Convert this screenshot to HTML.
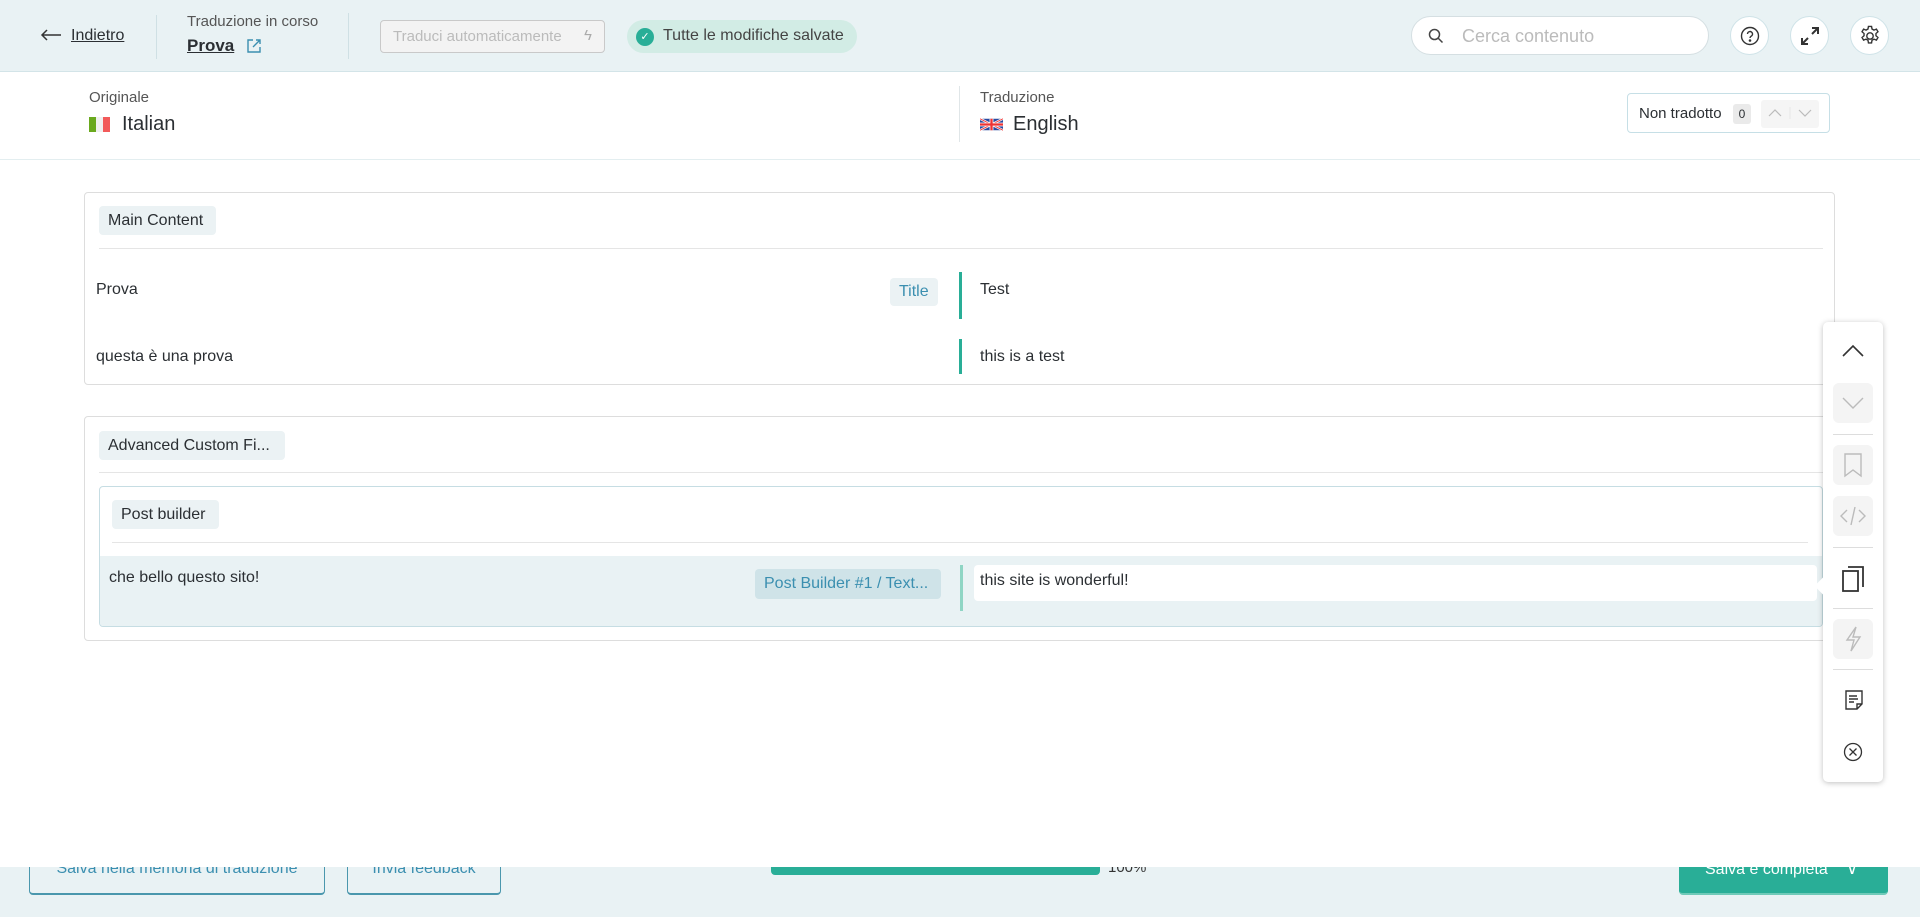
<!DOCTYPE html>
<html><head><meta charset="utf-8"><style>
*{box-sizing:border-box;margin:0;padding:0}
body{width:1920px;height:917px;overflow:hidden;background:#fff;font-family:"Liberation Sans",sans-serif;color:#2b2f33;position:relative}
.a{position:absolute}
.hdr{left:0;top:0;width:1920px;height:72px;background:#e9f2f4;border-bottom:1px solid #d3e4e8;z-index:3}
.vd{width:1px;background:#cfe0e4}
.tag{background:#ebf2f4;border-radius:4px;font-size:16px;color:#2b2f33;display:flex;align-items:center;padding:0 9px}
.circ{width:39px;height:39px;border-radius:50%;background:#fff;border:1px solid #cfe3e8;top:16px;display:flex;align-items:center;justify-content:center}
.sb{left:1833px;width:40px;height:40px;border-radius:6px;background:#f4f4f4;display:flex;align-items:center;justify-content:center}
.sep{left:1833px;width:40px;height:1px;background:#ddd}
</style></head><body>
<div class="a hdr">
  <svg class="a" style="left:40px;top:29px" width="22" height="12" viewBox="0 0 22 12" fill="none" stroke="#333" stroke-width="1.5"><path d="M21 6H2M7 1L2 6l5 5"/></svg>
  <div class="a" style="left:71px;top:27px;font-size:16px;text-decoration:underline;color:#2b2f33">Indietro</div>
  <div class="a vd" style="left:156px;top:15px;height:44px"></div>
  <div class="a" style="left:187px;top:13px;font-size:15px;color:#555">Traduzione in corso</div>
  <div class="a" style="left:187px;top:36px;font-size:17px;font-weight:bold;text-decoration:underline">Prova</div>
  <svg class="a" style="left:245px;top:37px" width="18" height="18" viewBox="0 0 18 18" fill="none" stroke="#3b8fb0" stroke-width="1.4"><path d="M8 3H3v12h12v-5M11 3h4v4M15 3L8 10"/></svg>
  <div class="a vd" style="left:348px;top:13px;height:46px"></div>
  <div class="a" style="left:380px;top:20px;width:225px;height:33px;border:1px solid #c9c9c9;border-radius:4px;background:#f3f3f3;font-size:15px;color:#bbb;padding:7px 12px">Traduci automaticamente<span style="position:absolute;right:12px;top:6px;color:#aaa">ϟ</span></div>
  <div class="a" style="left:627px;top:20px;width:230px;height:33px;border-radius:17px;background:#d2ece5;font-size:16px;color:#444;padding:7px 0 0 36px"><span style="position:absolute;left:9px;top:8px;width:18px;height:18px;border-radius:50%;background:#29ae97;color:#fff;font-size:11px;text-align:center;line-height:18px">✓</span>Tutte le modifiche salvate</div>
  <div class="a" style="left:1411px;top:16px;width:298px;height:39px;border-radius:20px;background:#fff;border:1px solid #d5dfe2;font-size:18px;color:#bbb;padding:9px 0 0 50px">Cerca contenuto
    <svg class="a" style="left:16px;top:11px" width="16" height="16" viewBox="0 0 16 16" fill="none" stroke="#444" stroke-width="1.5"><circle cx="6.5" cy="6.5" r="5"/><path d="M10 10l4.5 4.5"/></svg></div>
  <div class="a circ" style="left:1730px"><svg width="20" height="20" viewBox="0 0 20 20" fill="none" stroke="#333" stroke-width="1.4"><circle cx="10" cy="10" r="8.5"/><path d="M7.5 8a2.5 2.5 0 1 1 3.5 2.3c-.7.4-1 .8-1 1.7"/><circle cx="10" cy="14.5" r=".6" fill="#333"/></svg></div>
  <div class="a circ" style="left:1790px"><svg width="22" height="22" viewBox="0 0 22 22" fill="none" stroke="#333" stroke-width="2"><path d="M13 3h6v6M19 3l-6 6M9 19H3v-6M3 19l6-6"/></svg></div>
  <div class="a circ" style="left:1850px"><svg width="22" height="22" viewBox="0 0 24 24" fill="none" stroke="#333" stroke-width="1.5"><circle cx="12" cy="12" r="3.5"/><path d="M10.3 1.5h3.4l.5 2.9 2.1 1.2 2.7-1.1 1.7 2.9-2.2 1.9v2.4l2.2 1.9-1.7 2.9-2.7-1.1-2.1 1.2-.5 2.9h-3.4l-.5-2.9-2.1-1.2-2.7 1.1-1.7-2.9 2.2-1.9v-2.4L3.3 7.4 5 4.5l2.7 1.1 2.1-1.2z"/></svg></div>
</div>
<div class="a" style="left:0;top:867px;width:1920px;height:50px;background:#e9f2f4;z-index:0">
  <div class="a" style="left:29px;top:-40px;width:296px;height:68px;border:1px solid #4a97ad;border-bottom-width:2px;border-radius:4px;font-size:16px;color:#3b8fb0;text-align:center;padding-top:32px">Salva nella memoria di traduzione</div>
  <div class="a" style="left:347px;top:-40px;width:154px;height:68px;border:1px solid #4a97ad;border-bottom-width:2px;border-radius:4px;font-size:16px;color:#3b8fb0;text-align:center;padding-top:32px">Invia feedback</div>
  <div class="a" style="left:771px;top:-10px;width:329px;height:18px;border-radius:4px;background:#29ae97"></div>
  <div class="a" style="left:1108px;top:-8px;font-size:15px;color:#333">100%</div>
  <div class="a" style="left:1679px;top:-40px;width:209px;height:68px;background:#29ae97;border-bottom:2px solid #6fcab8;border-radius:4px;font-size:16px;color:#fff;padding:32px 0 0 26px">Salva e completa <span style="margin-left:14px">∨</span></div>
</div>
<div class="a" style="left:0;top:72px;width:1920px;height:795px;background:#fff;z-index:1"></div>
<div class="a" style="left:0;top:72px;width:1920px;height:88px;border-bottom:1px solid #e3eef0;z-index:2">
  <div class="a" style="left:89px;top:17px;font-size:15px;color:#555">Originale</div>
  <div class="a" style="left:89px;top:45px;width:7px;height:15px;background:#6aa91e"></div>
  <div class="a" style="left:96px;top:45px;width:7px;height:15px;background:#f0f0f0"></div>
  <div class="a" style="left:103px;top:45px;width:7px;height:15px;background:#f25a5a"></div>
  <div class="a" style="left:122px;top:41px;font-size:20px;color:#2b2f33">Italian</div>
  <div class="a vd" style="left:959px;top:14px;height:56px;background:#e0e6e8"></div>
  <div class="a" style="left:980px;top:17px;font-size:15px;color:#555">Traduzione</div>
  <svg class="a" style="left:980px;top:45px" width="23" height="15" viewBox="0 0 60 30"><rect width="60" height="30" fill="#2a4aa0"/><path d="M0 0L60 30M60 0L0 30" stroke="#fff" stroke-width="6"/><path d="M0 0L60 30M60 0L0 30" stroke="#e33" stroke-width="2.5"/><path d="M30 0v30M0 15h60" stroke="#fff" stroke-width="10"/><path d="M30 0v30M0 15h60" stroke="#e33" stroke-width="6"/></svg>
  <div class="a" style="left:1013px;top:41px;font-size:20px;color:#2b2f33">English</div>
  <div class="a" style="left:1627px;top:21px;width:203px;height:40px;border:1px solid #c6dfe6;border-radius:4px;font-size:15px;padding:11px 0 0 11px">Non tradotto
    <span class="a" style="left:105px;top:10px;width:18px;height:20px;background:#eaeaea;border-radius:3px;font-size:12px;text-align:center;line-height:20px">0</span>
    <span class="a" style="left:133px;top:6px;width:58px;height:28px;background:#f5f5f5;border-radius:3px;border-left:0"></span>
    <svg class="a" style="left:137px;top:13px" width="50" height="12" viewBox="0 0 50 12" fill="none" stroke="#bbb" stroke-width="1.2"><path d="M4 9l6-6 6 6M34 3l6 6 6-6"/><path d="M25 0v12" stroke="#e8e8e8"/></svg>
  </div>
</div>
<div class="a" style="left:84px;top:192px;width:1751px;height:193px;border:1px solid #ddd;border-radius:4px;z-index:2">
  <div class="a tag" style="left:14px;top:13px;height:29px;width:117px">Main Content</div>
  <div class="a" style="left:14px;top:55px;width:1724px;height:1px;background:#e5e5e5"></div>
  <div class="a" style="left:11px;top:88px;font-size:16px">Prova</div>
  <div class="a tag" style="left:805px;top:85px;height:28px;color:#3b8fb0">Title</div>
  <div class="a" style="left:874px;top:79px;width:3px;height:47px;background:#29ae97"></div>
  <div class="a" style="left:895px;top:88px;font-size:16px">Test</div>
  <div class="a" style="left:11px;top:155px;font-size:16px">questa è una prova</div>
  <div class="a" style="left:874px;top:146px;width:3px;height:35px;background:#29ae97"></div>
  <div class="a" style="left:895px;top:155px;font-size:16px">this is a test</div>
</div>
<div class="a" style="left:84px;top:416px;width:1751px;height:225px;border:1px solid #ddd;border-radius:4px;z-index:2">
  <div class="a tag" style="left:14px;top:14px;height:29px;width:186px">Advanced Custom Fi...</div>
  <div class="a" style="left:14px;top:55px;width:1724px;height:1px;background:#e5e5e5"></div>
  <div class="a" style="left:14px;top:69px;width:1724px;height:141px;border:1px solid #c6dde3;border-radius:4px;overflow:hidden">
    <div class="a tag" style="left:12px;top:13px;height:29px;width:107px">Post builder</div>
    <div class="a" style="left:12px;top:55px;width:1696px;height:1px;background:#e5e5e5"></div>
    <div class="a" style="left:0;top:69px;width:1724px;height:72px;background:#e9f2f4">
      <div class="a" style="left:9px;top:13px;font-size:16px">che bello questo sito!</div>
      <div class="a tag" style="left:655px;top:13px;height:30px;width:186px;background:#cfe3e8;color:#3b8fb0">Post Builder #1 / Text...</div>
      <div class="a" style="left:860px;top:9px;width:3px;height:46px;background:#8fd5c4"></div>
      <div class="a" style="left:874px;top:9px;width:843px;height:36px;background:#fff;border-radius:4px;font-size:16px;padding:7px 6px">this site is wonderful!</div>
    </div>
  </div>
</div>
<div class="a" style="left:1823px;top:322px;width:60px;height:460px;background:#fff;border-radius:5px;box-shadow:0 1px 6px rgba(0,0,0,.25);z-index:3">
  <div class="a" style="left:-6px;top:258px;width:12px;height:12px;background:#fff;transform:rotate(45deg)"></div>
  <svg class="a" style="left:18px;top:22px" width="24" height="14" viewBox="0 0 24 14" fill="none" stroke="#333" stroke-width="1.6"><path d="M2 12L12 2l10 10"/></svg>
</div>
<div class="a" style="z-index:4;left:0;top:0">
  <div class="a sb" style="top:383px"><svg width="24" height="14" viewBox="0 0 24 14" fill="none" stroke="#bbb" stroke-width="1.4"><path d="M2 2l10 10 10-10"/></svg></div>
  <div class="a sep" style="top:434px"></div>
  <div class="a sb" style="top:445px"><svg width="20" height="26" viewBox="0 0 20 26" fill="none" stroke="#bbb" stroke-width="1.4"><path d="M2 2h16v22l-8-6-8 6z"/></svg></div>
  <div class="a sb" style="top:496px"><svg width="28" height="22" viewBox="0 0 28 22" fill="none" stroke="#bbb" stroke-width="1.4"><path d="M8 5l-6 6 6 6M20 5l6 6-6 6M16 2l-4 18"/></svg></div>
  <div class="a sep" style="top:547px"></div>
  <svg class="a" style="left:1841px;top:565px" width="24" height="28" viewBox="0 0 24 28" fill="none" stroke="#333" stroke-width="1.8"><rect x="2" y="6" width="15" height="20"/><path d="M7 2h15v20"/></svg>
  <div class="a sep" style="top:608px"></div>
  <div class="a sb" style="top:619px"><svg width="18" height="28" viewBox="0 0 18 28" fill="none" stroke="#bbb" stroke-width="1.4"><path d="M12 2L3 15h7l-3 11 9-14H9z"/></svg></div>
  <div class="a sep" style="top:669px"></div>
  <svg class="a" style="left:1845px;top:690px" width="18" height="20" viewBox="0 0 18 20" fill="none" stroke="#333" stroke-width="1.4"><path d="M1 1h16v13l-5 5H1z M12 19v-5h5"/><path d="M4 6h8M4 9h9M4 12h5"/></svg>
  <svg class="a" style="left:1843px;top:742px" width="20" height="20" viewBox="0 0 20 20" fill="none" stroke="#333" stroke-width="1.3"><circle cx="10" cy="10" r="8.5"/><path d="M6.5 6.5l7 7M13.5 6.5l-7 7"/></svg>
</div>
</body></html>
